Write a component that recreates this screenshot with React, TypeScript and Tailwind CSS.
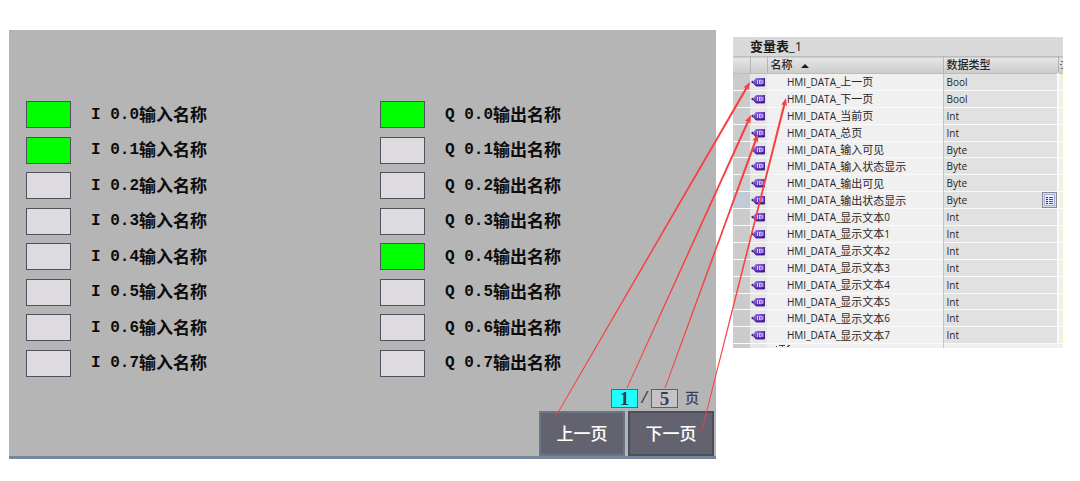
import React from "react";

interface Signal {
  address: string;
  name: string;
  on?: boolean;
}

interface Variable {
  suffix: string;
  digit?: string;
  type: string;
  selected?: boolean;
}

const inputs: Signal[] = [
  { address: "I 0.0", name: "输入名称", on: true },
  { address: "I 0.1", name: "输入名称", on: true },
  { address: "I 0.2", name: "输入名称" },
  { address: "I 0.3", name: "输入名称" },
  { address: "I 0.4", name: "输入名称" },
  { address: "I 0.5", name: "输入名称" },
  { address: "I 0.6", name: "输入名称" },
  { address: "I 0.7", name: "输入名称" },
];

const outputs: Signal[] = [
  { address: "Q 0.0", name: "输出名称", on: true },
  { address: "Q 0.1", name: "输出名称" },
  { address: "Q 0.2", name: "输出名称" },
  { address: "Q 0.3", name: "输出名称" },
  { address: "Q 0.4", name: "输出名称", on: true },
  { address: "Q 0.5", name: "输出名称" },
  { address: "Q 0.6", name: "输出名称" },
  { address: "Q 0.7", name: "输出名称" },
];

const variables: Variable[] = [
  { suffix: "上一页", type: "Bool" },
  { suffix: "下一页", type: "Bool" },
  { suffix: "当前页", type: "Int" },
  { suffix: "总页", type: "Int" },
  { suffix: "输入可见", type: "Byte" },
  { suffix: "输入状态显示", type: "Byte" },
  { suffix: "输出可见", type: "Byte" },
  { suffix: "输出状态显示", type: "Byte", selected: true },
  { suffix: "显示文本", digit: "0", type: "Int" },
  { suffix: "显示文本", digit: "1", type: "Int" },
  { suffix: "显示文本", digit: "2", type: "Int" },
  { suffix: "显示文本", digit: "3", type: "Int" },
  { suffix: "显示文本", digit: "4", type: "Int" },
  { suffix: "显示文本", digit: "5", type: "Int" },
  { suffix: "显示文本", digit: "6", type: "Int" },
  { suffix: "显示文本", digit: "7", type: "Int" },
];

// from the HMI control to the row of the variable behind it
const arrows = [
  { x1: 556, y1: 416, x2: 750, y2: 82 },
  { x1: 627, y1: 388, x2: 751, y2: 115 },
  { x1: 665, y1: 388, x2: 758, y2: 134 },
  { x1: 702, y1: 430, x2: 786, y2: 98 },
];

const SignalList: React.FC<{ items: Signal[] }> = ({ items }) => (
  <ul className="flex h-[276px] flex-col justify-between">
    {items.map((item) => (
      <li key={item.address} className="flex h-[27px] items-center gap-5">
        <span
          className={`h-[27px] w-[45px] border border-[#50505f] ${
            item.on ? "bg-[#00ff00]" : "bg-[#dddbdf]"
          }`}
        />
        <span className="flex items-center leading-none font-bold whitespace-pre text-[#0c0c0c]">
          <span className="font-['Liberation_Mono',monospace] text-[16px]">
            {item.address}
          </span>
          <span className="pb-[3px] text-[17px]">{item.name}</span>
        </span>
      </li>
    ))}
  </ul>
);

const TagIcon = () => (
  <svg width="14" height="10" viewBox="0 0 14 10" className="block">
    <defs>
      <linearGradient id="tag" x1="0" y1="0" x2="1" y2="1">
        <stop offset="0" stopColor="#a184ec" />
        <stop offset="0.5" stopColor="#6a3fcb" />
        <stop offset="1" stopColor="#3c1494" />
      </linearGradient>
    </defs>
    <path d="M0 5 2 3.6v2.8z" fill="#2c2450" />
    <path d="M1.5 5 5 1h8.5v8H5z" fill="url(#tag)" />
    <path d="M13.5 1v8H5L1.5 5" fill="none" stroke="#32107c" strokeWidth="0.8" />
    <path
      d="M6.5 3v4M8.5 3v4M8.5 3.3h1.7v3.4H8.5M11.8 3v4"
      fill="none"
      stroke="#ece4ff"
      strokeWidth="0.8"
    />
  </svg>
);

const ListIcon = () => (
  <svg width="13" height="14" viewBox="0 0 13 14" className="block">
    <rect x="1.5" y="1.5" width="10" height="11" fill="#e8ecff" stroke="#a3aee4" />
    <path d="M3 4.5h2M3 6.5h2M3 8.5h2M3 10.5h2" stroke="#26304f" />
    <path d="M6 4.5h4M6 6.5h4M6 8.5h4M6 10.5h4" stroke="#4a5688" />
  </svg>
);

const Arrow: React.FC<{ x1: number; y1: number; x2: number; y2: number }> = ({
  x1,
  y1,
  x2,
  y2,
}) => {
  const length = Math.hypot(x2 - x1, y2 - y1);
  const angle = (Math.atan2(y2 - y1, x2 - x1) * 180) / Math.PI;
  const neck = length - 7;
  return (
    <path
      transform={`translate(${x1} ${y1}) rotate(${angle})`}
      d={`M0 -0.4L${neck} -1.1L${neck - 1} -3L${length} 0L${neck - 1} 3L${neck} 1.1L0 0.4Z`}
      fill="#f93f3f"
    />
  );
};

export default function App() {
  return (
    <main className="relative flex items-start gap-[17px] bg-white px-[9px] pt-[30px] pr-[17px] pb-[22px] font-['Noto_Sans_CJK_SC',sans-serif]">
      {/* HMI screen */}
      <section className="min-w-0 flex-1 border-b-[3px] border-[#77879b] bg-[#b5b5b5] pt-[71px]">
        <div className="grid grid-cols-2 pl-[17px]">
          <SignalList items={inputs} />
          <div className="pl-[9px]">
            <SignalList items={outputs} />
          </div>
        </div>

        <div className="mt-3 flex items-center justify-end pr-[17px] text-[#3b3b50]">
          <input
            aria-label="当前页"
            readOnly
            value="1"
            className="h-[19px] w-[27px] border border-[#4c6a74] bg-[#1fffff] text-center font-['Liberation_Serif',serif] text-[19px] leading-none font-bold"
          />
          <span className="w-[13px] text-center font-['Liberation_Mono',monospace] text-[16px] leading-none">
            /
          </span>
          <input
            aria-label="总页"
            readOnly
            value="5"
            className="h-[19px] w-[27px] border border-[#5f5f6a] bg-[#c5c3c7] text-center font-['Liberation_Serif',serif] text-[19px] leading-none font-bold"
          />
          <span className="ml-[7px] pb-[3px] text-[14px] leading-none font-medium">页</span>
        </div>

        <div className="mt-[3px] flex justify-end gap-[3px] pr-[2px]">
          <button className="h-[45px] w-[86px] border-2 border-[#6a7688] bg-[#636370] pb-[3px] text-[17px] leading-none font-medium text-white">
            上一页
          </button>
          <button className="h-[45px] w-[86px] border-2 border-[#4c4f5b] bg-[#636370] pb-[3px] text-[17px] leading-none font-medium text-white">
            下一页
          </button>
        </div>
      </section>

      {/* PLC variable table */}
      <section className="mt-[7px] w-[330px] shrink-0 bg-[#d9d9d9]">
        <h2 className="h-[19px] pl-[17px] text-[13px] leading-[18px] font-bold text-[#1c1c1c]">
          变量表<span className="font-['Open_Sans',sans-serif] font-medium">_1</span>
        </h2>
        <table className="h-[292px] w-full table-fixed border-collapse text-left text-[11px] leading-none text-[#262626]">
          <colgroup>
            <col className="w-[17px]" />
            <col className="w-[17px]" />
            <col />
            <col className="w-[115px]" />
            <col className="w-[5px]" />
          </colgroup>
          <thead>
            <tr className="h-[17px] border-y border-[#bdbdbd] bg-linear-to-b from-[#e6e6e6] to-[#cccccc]">
              <th className="p-0" />
              <th className="border-x border-[#b4b4b4] p-0" />
              <th className="p-0 pb-[2px] pl-[3px] font-medium">
                <span className="flex items-center gap-2">
                  名称
                  <svg width="8" height="4" viewBox="0 0 8 4" className="mt-1">
                    <path d="M0 4 4 0l4 4z" fill="#1b1b1b" />
                  </svg>
                </span>
              </th>
              <th className="border-x border-[#b4b4b4] p-0 pb-[2px] pl-[3px] font-medium">
                数据类型
              </th>
              <th className="p-0">
                <svg width="3" height="10" viewBox="0 0 3 10" className="ml-auto block">
                  <path d="M1 1.5h2M0 4.5h2M1 8.5h2" stroke="#6b6b6b" />
                </svg>
              </th>
            </tr>
          </thead>
          <tbody>
            {variables.map((item) => (
              <tr
                key={item.suffix + (item.digit ?? "")}
                className="h-[16px] border-b border-[#fafafa] bg-[#f0f0f0]"
              >
                <td className={`p-0 ${item.selected ? "bg-[#c0cbd6]" : "bg-[#cbcbcb]"}`} />
                <td className="bg-[#e6e6e6] p-0 pl-px">
                  <TagIcon />
                </td>
                <td className="p-0 pl-[20px]">
                  <span className="flex items-center whitespace-nowrap">
                    <span className="font-['Open_Sans',sans-serif] text-[10px]">HMI_DATA_</span>
                    {item.suffix}
                    <span className="font-['Open_Sans',sans-serif] text-[10px]">{item.digit}</span>
                  </span>
                </td>
                <td className="border-l border-[#c4c4c4] bg-[#e1e1e1] p-0 pl-[3px] font-['Open_Sans',sans-serif] text-[10px]">
                  <span className="flex items-center justify-between">
                    {item.type}
                    {item.selected && (
                      <button
                        aria-label="选择数据类型"
                        className="-my-px border border-[#8b8b8b] bg-[#dcdcdc]"
                      >
                        <ListIcon />
                      </button>
                    )}
                  </span>
                </td>
                <td className="border-l-2 border-[#fafafa] bg-linear-to-r from-[#f0f0f0] from-60% to-[#f3f0ae] p-0" />
              </tr>
            ))}
            <tr className="h-[4px] bg-[#f0f0f0]">
              <td className="bg-[#cbcbcb] p-0" />
              <td className="bg-[#e6e6e6] p-0" />
              <td className="p-0 pl-[8px]">
                {/* top edge of the row that is scrolled out of view */}
                <svg width="16" height="2" viewBox="0 0 16 2" className="block">
                  <path d="M1 1.5h1M4 .5h6M7 1.5h1M13 .5h2M12 1.5h2" stroke="#4a4a4a" />
                </svg>
              </td>
              <td className="border-l border-[#c4c4c4] p-0" />
              <td className="p-0" />
            </tr>
          </tbody>
        </table>
      </section>

      <svg className="pointer-events-none absolute top-0 left-0" width="1080" height="481">
        {arrows.map((arrow) => (
          <Arrow key={arrow.x1} {...arrow} />
        ))}
      </svg>
    </main>
  );
}
